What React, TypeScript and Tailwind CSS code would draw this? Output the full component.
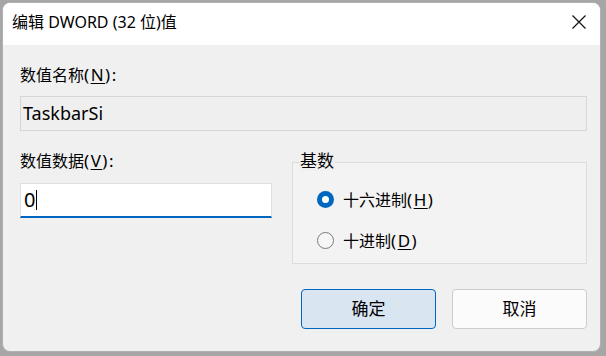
import React from "react";

const font = { fontFamily: '"Noto Sans", "Noto Sans CJK SC", sans-serif' };

function L({ children }: { children: React.ReactNode }) {
  return <span className="text-[17px] tracking-[1.5px]">{children}</span>;
}

function Radio({ checked, label, u }: { checked: boolean; label: string; u: string }) {
  return (
    <div className="flex items-center h-[20px]">
      {checked ? (
        <div className="w-[17px] h-[17px] rounded-full bg-[#0067c0] flex items-center justify-center shrink-0">
          <div className="w-[7px] h-[7px] rounded-full bg-white" />
        </div>
      ) : (
        <div className="w-[17px] h-[17px] rounded-full border border-[#7a7a7a] bg-[#f6f6f6] shrink-0" />
      )}
      <span className="ml-[9px] text-[16px] text-black leading-none whitespace-nowrap">
        {label}
        <L>
          (<span className="underline underline-offset-2">{u}</span>)
        </L>
      </span>
    </div>
  );
}

export default function App() {
  return (
    <div className="w-[606px] h-[356px] bg-[#a6a6a6] pl-[2px] pt-[2px] pr-[5px] pb-[4px] overflow-hidden" style={font}>
      <div className="w-full h-full rounded-[8px] overflow-hidden flex flex-col bg-[#f0f0f0] border border-[#b0b0b0]">
        <div className="h-[42px] bg-white flex items-center justify-between pl-[9px] pr-[14px] pb-[4px] shrink-0">
          <span className="text-[16px] text-black whitespace-nowrap">编辑 DWORD (32 位)值</span>
          <svg width="14" height="14" viewBox="0 0 14 14">
            <path d="M0.5 0.5 L13.5 13.5 M13.5 0.5 L0.5 13.5" stroke="#111" strokeWidth="1.2" />
          </svg>
        </div>
        <div className="flex-1 pl-[17px] pr-[13px] pt-[20px] text-black">
          <div className="text-[16px] leading-[20px] whitespace-nowrap">
            数值名称
            <L>
              (<span className="underline underline-offset-2">N</span>):
            </L>
          </div>
          <div className="mt-[11px] h-[35px] border border-[#d6d6d6] bg-[#efefef] flex items-center pl-[2px] text-[18px]">
            TaskbarSi
          </div>
          <div className="flex mt-[31px]">
            <div className="w-[252px]">
              <div className="mt-[-11px] text-[16px] leading-[20px] whitespace-nowrap">
                数值数据
                <L>
                  (<span className="underline underline-offset-2">V</span>):
                </L>
              </div>
              <div className="mt-[12px] h-[35px] bg-white border border-[#e0e0e0] border-b-2 border-b-[#0067c0] flex items-center pl-[3px]">
                <span className="text-[20px] leading-none">0</span>
                <span className="ml-[1px] w-[1px] h-[20px] bg-black" />
              </div>
            </div>
            <div className="ml-[20px] flex-1 h-[102px] border border-[#dcdcdc] bg-[#f3f3f3] relative">
              <span className="absolute left-[6px] top-[-12px] px-[1px] bg-[#f0f0f0] text-[17px] leading-[20px]">基数</span>
              <div className="pl-[24px] pt-[26px] flex flex-col gap-[21px]">
                <Radio checked label="十六进制" u="H" />
                <Radio checked={false} label="十进制" u="D" />
              </div>
            </div>
          </div>
          <div className="flex justify-end gap-[16px] mt-[25px]">
            <div className="w-[135px] h-[40px] rounded-[4px] border border-[#0067c0] bg-[#d9e5f1] flex items-center justify-center text-[17px]">
              确定
            </div>
            <div className="w-[135px] h-[40px] rounded-[4px] border border-[#cccccc] bg-[#fbfbfb] flex items-center justify-center text-[17px]">
              取消
            </div>
          </div>
        </div>
      </div>
    </div>
  );
}
